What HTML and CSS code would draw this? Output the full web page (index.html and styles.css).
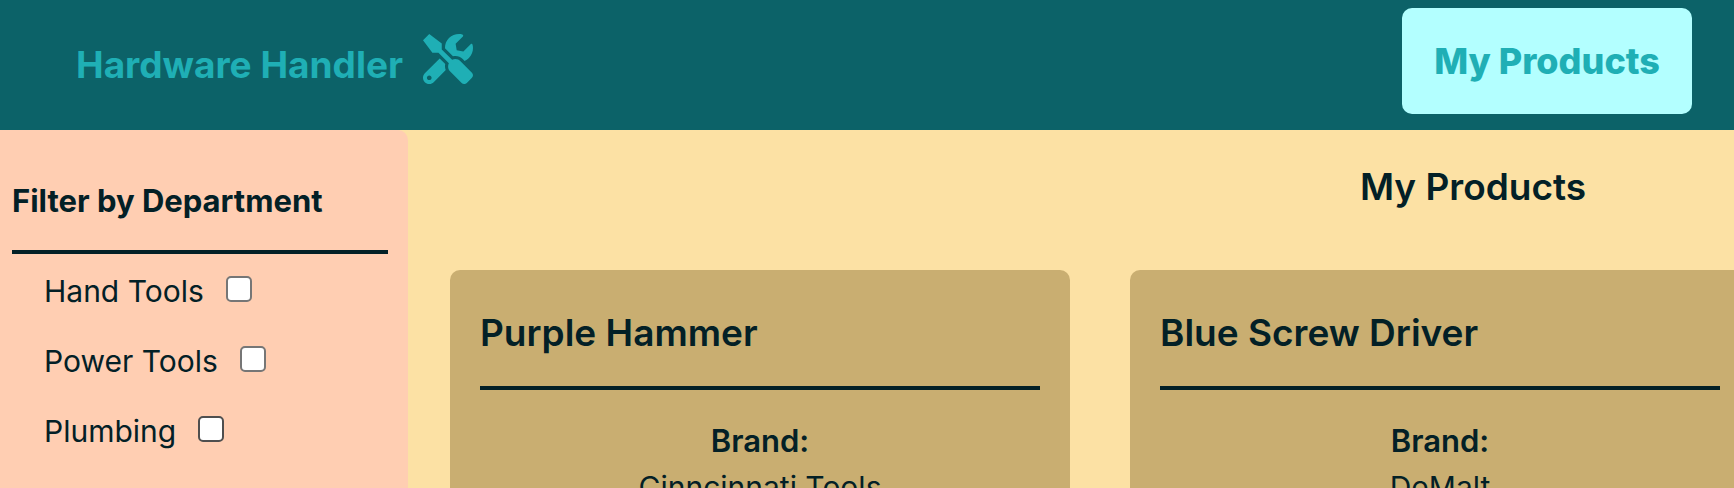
FILE: index.html
```html
<!DOCTYPE html>
<html lang="en">
<head>
<meta charset="utf-8">
<meta name="viewport" content="width=device-width, initial-scale=1">
<title>Hardware Handler</title>
<link rel="stylesheet" href="styles.css">
</head>
<body>
<header class="header">
  <div class="brand">
    <h1 class="brand-name">Hardware Handler</h1>
    <svg class="brand-icon" viewBox="0 0 512 512" aria-hidden="true"><path fill="currentColor" d="M501.1 395.7L384 278.6c-23.1-23.1-57.6-27.6-85.4-13.9L192 158.1V96L64 0 0 64l96 128h62.1l106.6 106.6c-13.6 27.8-9.2 62.3 13.9 85.4l117.1 117.1c14.6 14.6 38.2 14.6 52.7 0l52.7-52.7c14.5-14.6 14.5-38.2 0-52.7zM331.7 225c28.3 0 54.9 11 74.9 31l19.4 19.4c15.8-6.9 30.8-16.5 43.8-29.5 37.1-37.1 49.7-89.3 37.9-136.7-2.2-9-13.5-12.1-20.1-5.5l-74.4 74.4-67.9-11.3L334 98.9l74.4-74.4c6.6-6.6 3.4-17.9-5.7-20.2-47.4-11.7-99.6.9-136.6 37.9-28.5 28.5-41.9 66.1-41.2 103.6l82.1 82.1c8.1-1.9 16.5-2.9 24.7-2.9zm-103.9 82l-56.7-56.7L18.7 402.8c-25 25-25 65.5 0 90.5s65.5 25 90.5 0l123.6-123.6c-7.6-19.9-9.9-41.6-5-62.7zM64 472c-13.2 0-24-10.8-24-24 0-13.3 10.7-24 24-24s24 10.7 24 24c0 13.2-10.7 24-24 24z"/></svg>
  </div>
  <a class="nav-link" href="#products">My Products</a>
</header>
<main class="main">
  <aside class="sidebar">
    <h2 class="sidebar-title">Filter by Department</h2>
    <ul class="filters">
      <li><label class="filter">Hand Tools<input class="checkbox" type="checkbox"></label></li>
      <li><label class="filter">Power Tools<input class="checkbox" type="checkbox"></label></li>
      <li><label class="filter">Plumbing<input class="checkbox checkbox-active" type="checkbox"></label></li>
    </ul>
  </aside>
  <section class="products" id="products">
    <div class="track">
      <h2 class="products-title">My Products</h2>
      <div class="cards">
        <article class="card">
          <h3 class="card-title">Purple Hammer</h3>
          <dl class="details">
            <dt class="term">Brand:</dt>
            <dd class="value">Cinncinnati Tools</dd>
          </dl>
        </article>
        <article class="card">
          <h3 class="card-title">Blue Screw Driver</h3>
          <dl class="details">
            <dt class="term">Brand:</dt>
            <dd class="value">DeMalt</dd>
          </dl>
        </article>
      </div>
    </div>
  </section>
</main>
</body>
</html>
```

FILE: styles.css
```css
* {
  box-sizing: border-box;
}

body {
  display: flex;
  flex-direction: column;
  height: 100vh;
  margin: 0;
  overflow: hidden;
  background: #fce1a4;
  color: #032026;
  font-family: Inter, "Liberation Sans", sans-serif;
  font-size: 30px;
  line-height: 46px;
}

h1, h2, h3, ul, dl, dd {
  margin: 0;
  padding: 0;
}

.header {
  display: flex;
  flex-shrink: 0;
  align-items: flex-start;
  justify-content: space-between;
  padding: 8px 42px 16px 76px;
  background: #0c6268;
  color: #1fafb5;
}

.brand {
  display: flex;
  gap: 20px;
  padding-top: 26px;
}

.brand-name {
  padding-top: 8px;
  font-size: 37px;
  font-weight: 700;
  line-height: 46px;
}

.brand-icon {
  width: 50px;
  height: 50px;
}

.nav-link {
  padding: 30px 32px;
  border-radius: 10px;
  background: #b3ffff;
  color: inherit;
  font-size: 36px;
  font-weight: 800;
  line-height: 46px;
  text-decoration: none;
}

.main {
  display: flex;
  flex: 1;
  min-height: 0;
}

.sidebar {
  flex: 0 0 408px;
  padding: 48px 20px 0 12px;
  border-top-right-radius: 10px;
  background: #ffceb2;
}

.sidebar-title {
  padding-bottom: 26px;
  border-bottom: 4px solid #032026;
  font-size: 31px;
  font-weight: 700;
}

.filters {
  display: grid;
  gap: 24px;
  padding: 14px 0 0 32px;
  list-style: none;
}

.filter {
  display: flex;
  gap: 22px;
  align-items: flex-start;
}

.checkbox {
  width: 26px;
  height: 26px;
  margin: 8px 0 0;
  border: 2px solid #767676;
  border-radius: 5px;
  appearance: none;
  background: #fff;
}

.checkbox-active {
  border-color: #4f4f4f;
}

.checkbox:checked {
  background: #0c6268;
}

.products {
  flex: 1;
  min-width: 0;
  overflow: hidden;
}

/* Wider than the window, so that the card row runs off the right side. */
.track {
  width: 2130px;
  padding: 34px 42px 0;
}

.products-title {
  padding-bottom: 60px;
  font-size: 37px;
  font-weight: 600;
  text-align: center;
}

.cards {
  display: flex;
  gap: 60px;
}

.card {
  flex: 0 0 620px;
  padding: 40px 30px;
  border-radius: 10px;
  background: #c9ae71;
}

.card-title {
  padding-bottom: 30px;
  border-bottom: 4px solid #032026;
  font-size: 37px;
  font-weight: 600;
}

.details {
  padding-top: 28px;
  text-align: center;
}

.term {
  font-size: 31px;
  font-weight: 600;
}
```
